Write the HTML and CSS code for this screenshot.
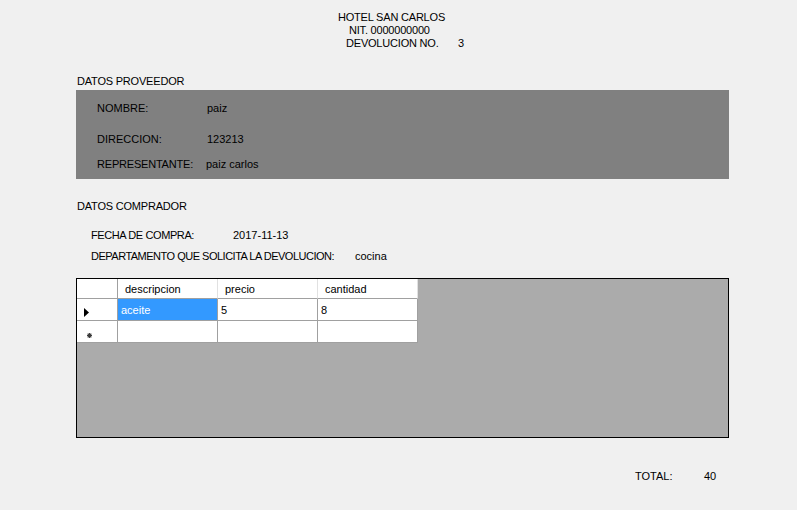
FILE: index.html
```html
<!DOCTYPE html>
<html>
<head>
<meta charset="utf-8">
<link rel="stylesheet" href="styles.css">
</head>
<body>
<div class="form">
  <header class="title">
    <div class="t1">HOTEL SAN CARLOS</div>
    <div class="t2">NIT. 0000000000</div>
    <div class="t3"><span class="t3-label">DEVOLUCION NO.</span><span>3</span></div>
  </header>

  <div class="section-title first">DATOS PROVEEDOR</div>
  <section class="panel">
    <div class="prow r1"><span class="plabel">NOMBRE:</span><span>paiz</span></div>
    <div class="prow r2"><span class="plabel">DIRECCION:</span><span>123213</span></div>
    <div class="prow r3"><span class="plabel narrow">REPRESENTANTE:</span><span>paiz carlos</span></div>
  </section>

  <div class="section-title second">DATOS COMPRADOR</div>
  <div class="crow c1"><span class="clabel-date">FECHA DE COMPRA:</span><span>2017-11-13</span></div>
  <div class="crow c2"><span class="clabel-dep">DEPARTAMENTO QUE SOLICITA LA DEVOLUCION:</span><span>cocina</span></div>

  <div class="grid">
    <div class="table">
      <div class="cell hdr rowhdr"></div>
      <div class="cell hdr">descripcion</div>
      <div class="cell hdr">precio</div>
      <div class="cell hdr">cantidad</div>

      <div class="cell rowhdr arrow-cell">
        <svg width="5" height="9" viewBox="0 0 5 9"><polygon points="0,0 5,4.5 0,9" fill="#000"/></svg>
      </div>
      <div class="cell data selected">aceite</div>
      <div class="cell data">5</div>
      <div class="cell data">8</div>

      <div class="cell rowhdr star-cell">
        <svg width="5" height="5" viewBox="0 0 5 5"><g stroke="#3c3c3c" stroke-width="1.2"><line x1="2.5" y1="0" x2="2.5" y2="5"/><line x1="0" y1="2.5" x2="5" y2="2.5"/><line x1="0.7" y1="0.7" x2="4.3" y2="4.3"/><line x1="4.3" y1="0.7" x2="0.7" y2="4.3"/></g></svg>
      </div>
      <div class="cell data"></div>
      <div class="cell data"></div>
      <div class="cell data"></div>
    </div>
  </div>

  <div class="total"><span class="total-label">TOTAL:</span><span>40</span></div>
</div>
</body>
</html>
```

FILE: styles.css
```css
html, body {
  margin: 0;
  padding: 0;
  background: #f0f0f0;
}

body {
  width: 797px;
  height: 510px;
  overflow: hidden;
  font-family: "Liberation Sans", Arial, sans-serif;
  font-size: 11px;
  line-height: 13px;
  color: #000;
}

.form {
  display: flex;
  flex-direction: column;
  align-items: flex-start;
}

.title {
  display: flex;
  flex-direction: column;
  padding-top: 11px;
}

.t1 { margin-left: 338px; letter-spacing: -0.2px; }
.t2 { margin-left: 349px; letter-spacing: -0.2px; }
.t3 { margin-left: 346px; display: flex; }
.t3-label { width: 112px; letter-spacing: -0.2px; }

.section-title {
  margin-left: 77px;
  letter-spacing: -0.2px;
}
.section-title.first { margin-top: 25px; }
.section-title.second { margin-top: 21px; }

.panel {
  margin-top: 2px;
  margin-left: 76px;
  width: 653px;
  height: 89px;
  box-sizing: border-box;
  background: #808080;
  padding-top: 12px;
  display: flex;
  flex-direction: column;
}

.prow {
  display: flex;
  padding-left: 21px;
}
.prow.r2 { margin-top: 18px; }
.prow.r3 { margin-top: 12px; }

.plabel { width: 110px; }
.plabel.narrow { width: 109px; letter-spacing: -0.2px; }

.crow {
  display: flex;
  margin-left: 91px;
}
.crow.c1 { margin-top: 16px; }
.crow.c2 { margin-top: 8px; }

.clabel-date { width: 142px; letter-spacing: -0.4px; }
.clabel-dep { width: 264px; letter-spacing: -0.5px; }

.grid {
  margin-top: 15px;
  margin-left: 76px;
  width: 653px;
  height: 160px;
  box-sizing: border-box;
  border: 1px solid #000;
  background: #ababab;
}

.table {
  display: grid;
  grid-template-columns: 41px 100px 100px 100px;
  grid-template-rows: 20px 22px 22px;
  width: 341px;
}

.cell {
  box-sizing: border-box;
  background: #fff;
  display: flex;
  align-items: center;
  white-space: nowrap;
}

.hdr {
  border-right: 1px solid #e1e1e1;
  border-bottom: 1px solid #a0a0a0;
  padding-left: 7px;
  padding-top: 1px;
}

.data {
  border-right: 1px solid #a0a0a0;
  border-bottom: 1px solid #a0a0a0;
  padding-left: 3px;
  padding-top: 2px;
}

.rowhdr {
  border-right: 1px solid #a0a0a0;
  border-bottom: 1px solid #a0a0a0;
}

.rowhdr.hdr {
  padding-left: 0;
}

.arrow-cell {
  padding-left: 7px;
  padding-top: 5px;
}

.star-cell {
  padding-left: 10px;
  padding-top: 7px;
}

.selected {
  background: #3399ff;
  color: #fff;
}

.total {
  display: flex;
  margin-top: 32px;
  margin-left: 635px;
}
.total-label { width: 69px; }
```
